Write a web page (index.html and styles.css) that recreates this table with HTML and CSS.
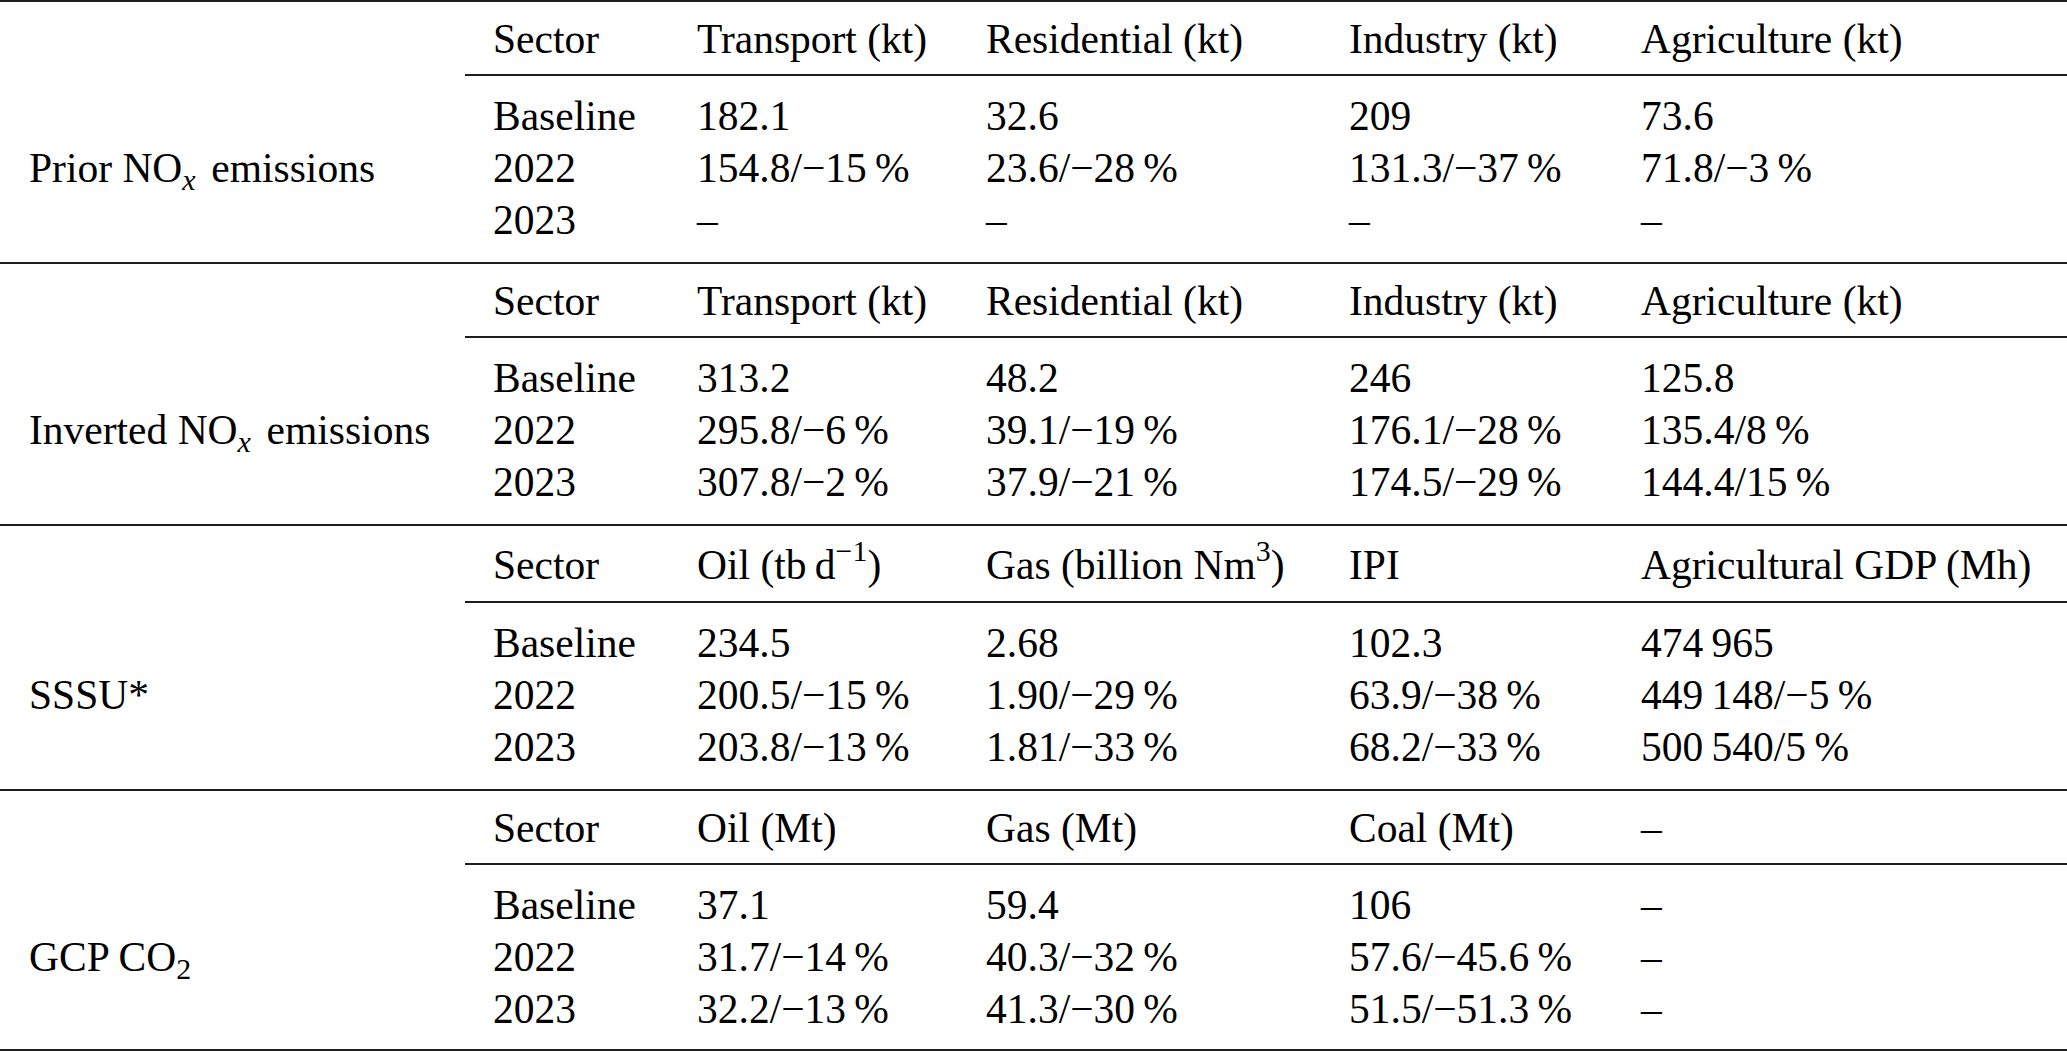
FILE: index.html
```html
<!DOCTYPE html>
<html lang="en">
<head>
<meta charset="utf-8">
<title>Emissions table</title>
<link rel="stylesheet" href="styles.css">
</head>
<body>
<div class="tbl">
  <section class="sec">
    <div class="row head"><div class="c0"></div><div class="c">Sector</div><div class="c">Transport (kt)</div><div class="c">Residential (kt)</div><div class="c">Industry (kt)</div><div class="c">Agriculture (kt)</div></div>
    <div class="row first"><div class="c0"></div><div class="c">Baseline</div><div class="c">182.1</div><div class="c">32.6</div><div class="c">209</div><div class="c">73.6</div></div>
    <div class="row"><div class="c0 lbl">Prior NO<sub class="m">x</sub> emissions</div><div class="c">2022</div><div class="c">154.8/−15&#8239;%</div><div class="c">23.6/−28&#8239;%</div><div class="c">131.3/−37&#8239;%</div><div class="c">71.8/−3&#8239;%</div></div>
    <div class="row last"><div class="c0"></div><div class="c">2023</div><div class="c">–</div><div class="c">–</div><div class="c">–</div><div class="c">–</div></div>
  </section>
  <section class="sec">
    <div class="row head"><div class="c0"></div><div class="c">Sector</div><div class="c">Transport (kt)</div><div class="c">Residential (kt)</div><div class="c">Industry (kt)</div><div class="c">Agriculture (kt)</div></div>
    <div class="row first"><div class="c0"></div><div class="c">Baseline</div><div class="c">313.2</div><div class="c">48.2</div><div class="c">246</div><div class="c">125.8</div></div>
    <div class="row"><div class="c0 lbl">Inverted NO<sub class="m">x</sub> emissions</div><div class="c">2022</div><div class="c">295.8/−6&#8239;%</div><div class="c">39.1/−19&#8239;%</div><div class="c">176.1/−28&#8239;%</div><div class="c">135.4/8&#8239;%</div></div>
    <div class="row last"><div class="c0"></div><div class="c">2023</div><div class="c">307.8/−2&#8239;%</div><div class="c">37.9/−21&#8239;%</div><div class="c">174.5/−29&#8239;%</div><div class="c">144.4/15&#8239;%</div></div>
  </section>
  <section class="sec">
    <div class="row head tall"><div class="c0"></div><div class="c">Sector</div><div class="c">Oil (tb&#8239;d<sup>−1</sup>)</div><div class="c">Gas (billion Nm<sup>3</sup>)</div><div class="c">IPI</div><div class="c">Agricultural GDP (Mh)</div></div>
    <div class="row first"><div class="c0"></div><div class="c">Baseline</div><div class="c">234.5</div><div class="c">2.68</div><div class="c">102.3</div><div class="c">474&#8239;965</div></div>
    <div class="row"><div class="c0 lbl">SSSU*</div><div class="c">2022</div><div class="c">200.5/−15&#8239;%</div><div class="c">1.90/−29&#8239;%</div><div class="c">63.9/−38&#8239;%</div><div class="c">449&#8239;148/−5&#8239;%</div></div>
    <div class="row last"><div class="c0"></div><div class="c">2023</div><div class="c">203.8/−13&#8239;%</div><div class="c">1.81/−33&#8239;%</div><div class="c">68.2/−33&#8239;%</div><div class="c">500&#8239;540/5&#8239;%</div></div>
  </section>
  <section class="sec end">
    <div class="row head"><div class="c0"></div><div class="c">Sector</div><div class="c">Oil (Mt)</div><div class="c">Gas (Mt)</div><div class="c">Coal (Mt)</div><div class="c">–</div></div>
    <div class="row first"><div class="c0"></div><div class="c">Baseline</div><div class="c">37.1</div><div class="c">59.4</div><div class="c">106</div><div class="c">–</div></div>
    <div class="row"><div class="c0 lbl">GCP CO<sub>2</sub></div><div class="c">2022</div><div class="c">31.7/−14&#8239;%</div><div class="c">40.3/−32&#8239;%</div><div class="c">57.6/−45.6&#8239;%</div><div class="c">–</div></div>
    <div class="row last"><div class="c0"></div><div class="c">2023</div><div class="c">32.2/−13&#8239;%</div><div class="c">41.3/−30&#8239;%</div><div class="c">51.5/−51.3&#8239;%</div><div class="c">–</div></div>
  </section>
</div>
</body>
</html>
```
FILE: styles.css
```css
html, body {
  margin: 0;
  padding: 0;
  background: #fff;
  overflow: hidden;
}
.tbl {
  width: 2067px;
  font-family: "Liberation Serif", "Times New Roman", serif;
  font-size: 41.5px;
  line-height: 52px;
  color: #000;
}
.sec {
  border-top: 2px solid #1e1e1e;
}
.sec.end {
  border-bottom: 2px solid #1e1e1e;
}
.row {
  display: grid;
  grid-template-columns: 465px 204px 289px 363px 292px 1fr;
}
.c {
  padding-left: 28px;
  white-space: nowrap;
}
.c0 {
  padding-left: 29px;
  white-space: nowrap;
}
.head .c {
  padding-top: 11px;
  padding-bottom: 9px;
  border-bottom: 2px solid #1e1e1e;
}
.head.tall .c {
  padding-top: 13px;
  padding-bottom: 10px;
}
.first .c,
.first .c0 {
  padding-top: 14px;
}
.last .c,
.last .c0 {
  padding-bottom: 16px;
}
.end .last .c,
.end .last .c0 {
  padding-bottom: 14px;
}
sub, sup {
  line-height: 0;
  font-size: 0.72em;
}
sub {
  vertical-align: -0.26em;
}
sup {
  vertical-align: 0.6em;
}
sub.m {
  font-style: italic;
  margin-right: 0.18em;
}
```
